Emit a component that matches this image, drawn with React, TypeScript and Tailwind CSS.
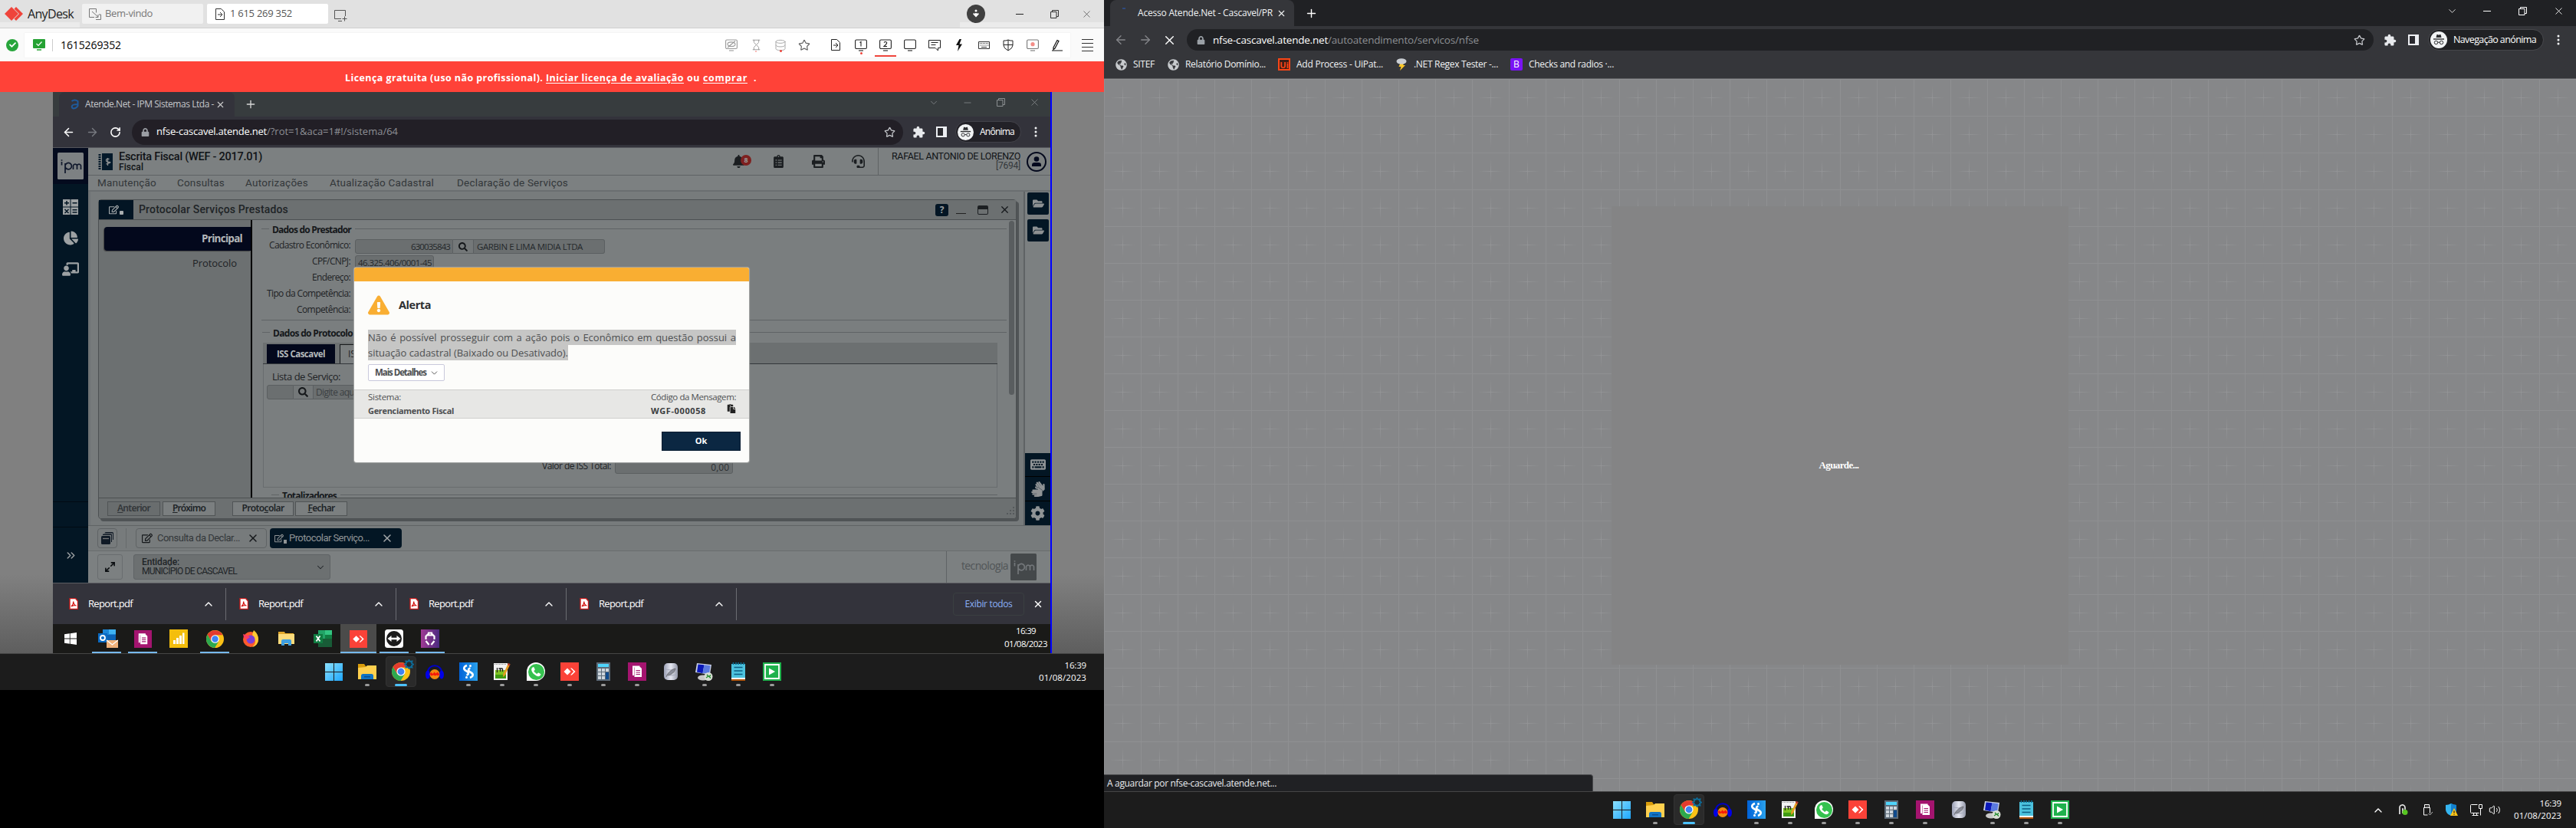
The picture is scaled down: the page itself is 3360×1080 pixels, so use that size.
import React, { useLayoutEffect, useRef } from "react";
import {
  ArrowLeft, ArrowRight, RotateCw, X, Plus, Star, Minus, ChevronDown, ChevronUp, ChevronsRight,
  Hourglass, Database, FileInput, Keyboard, MessageSquareText, Volume2, Maximize2,
} from "lucide-react";
import {
  FaBell, FaClipboardList, FaPrint, FaHeadset, FaChartPie, FaChalkboardTeacher, FaRegEdit, FaCog, FaFolderOpen,
  FaKeyboard, FaExclamationTriangle, FaPaste, FaGlobeAmericas, FaCheck, FaLock, FaSearch, FaSignLanguage,
} from "react-icons/fa";

/** Single line of text whose tracking is tuned so that it spans `w` pixels. */
function T({ w, className = "", children }: { w: number; className?: string; children: React.ReactNode }) {
  const ref = useRef<HTMLSpanElement>(null);
  useLayoutEffect(() => {
    const el = ref.current;
    if (!el) return;
    el.style.letterSpacing = "0px";
    const n = (el.textContent || "").length;
    const natural = el.getBoundingClientRect().width;
    el.style.letterSpacing = (w - natural) / n + "px";
  }, [w]);
  return (
    <span className={"inline-block shrink-0 whitespace-nowrap " + className} style={{ width: w }}>
      <span ref={ref} className="inline-block whitespace-pre [text-decoration:inherit]">{children}</span>
    </span>
  );
}

/* ---------- application icons ---------- */

const Chrome = ({ s = 24 }: { s?: number }) => (
  <svg width={s} height={s} viewBox="0 0 24 24">
    <circle cx="12" cy="12" r="12" fill="#fbc116" />
    <path d="M12 6.400H22.400A12 12 0 0 0 1.600 6L7 15Z" fill="#e33b2e" />
    <path d="M1.600 6A12 12 0 0 0 11.600 24L17 15 12 17.500 7 15Z" fill="#2da94f" />
    <circle cx="12" cy="12" r="5.600" fill="#fff" />
    <circle cx="12" cy="12" r="4.400" fill="#3f83f3" />
  </svg>
);
const Win11 = () => (
  <svg width="23" height="23" viewBox="0 0 23 23">
    <defs><linearGradient id="w11" x1="0" y1="0" x2="1" y2="1"><stop offset="0" stopColor="#8be0ff" /><stop offset="1" stopColor="#1ea7ff" /></linearGradient></defs>
    <path d="M0 0h11v11H0zM12 0h11v11H12zM0 12h11v11H0zM12 12h11v11H12z" fill="url(#w11)" />
  </svg>
);
const Win10 = () => (
  <svg width="16" height="16" viewBox="0 0 16 16" fill="#fff"><path d="M0 2.200 6.800 1.300v6.300H0zM7.600 1.200 16 0v7.600H7.600zM0 8.400h6.800v6.300L0 13.800zM7.600 8.400H16V16l-8.400-1.200z" /></svg>
);
const Explorer = ({ s = 24 }: { s?: number }) => (
  <svg width={s} height={s} viewBox="0 0 24 24">
    <path d="M0 2h8l2 3h6v4H0z" fill="#d99c0b" /><path d="M0 7l10-1 2-2h12v18H0z" fill="#ffd04e" />
    <path d="M4 22v-4.500q0-2.500 2.500-2.500h11q2.500 0 2.500 2.500V22z" fill="#1073c4" /><path d="M8 18h8v1.500H8z" fill="#0a4f91" />
  </svg>
);
const Explorer10 = () => (
  <svg width="21" height="18" viewBox="0 0 21 18">
    <path d="M0 0h8l1 2h11v4H0z" fill="#e2a92c" /><path d="M0 3h21v13H0z" fill="#fcdc7c" />
    <path d="M4 18v-6q0-2 2-2h9q2 0 2 2v6h-4v-3H8v3z" fill="#3f9fe0" />
  </svg>
);
const Audacity = () => (
  <svg width="24" height="22" viewBox="0 0 24 22">
    <path d="M3 13C2 0 22 0 21 13" fill="none" stroke="#0000c8" strokeWidth="2" />
    <ellipse cx="3" cy="15" rx="3" ry="5.500" fill="#0000e8" /><ellipse cx="21" cy="15" rx="3" ry="5.500" fill="#0000e8" />
    <ellipse cx="12" cy="14.500" rx="6.500" ry="6.500" fill="#f28a10" /><path d="M5.500 14l2-2 2 2 2-2.500 2 2 2-2 3 3-2 2-2-1-2 1-2-1-3 1z" fill="#f51a0a" />
  </svg>
);
const Stitch = () => (
  <svg width="24" height="24" viewBox="0 0 24 24">
    <defs><linearGradient id="sg" x1="0" y1="0" x2="1" y2="0"><stop offset="0" stopColor="#0062d8" /><stop offset="1" stopColor="#2aa1ec" /></linearGradient></defs>
    <path d="M0 0h24v24H0z" fill="url(#sg)" />
    <path d="M10 4C5.500 5.500 5 9 9 11s3.500 5 .5 5.500M14 20c4.500-1.500 5-5 1-7s-3.500-5-.5-5.500" fill="none" stroke="#fff" strokeWidth="2.600" />
    <circle cx="14.500" cy="4.500" r="1.500" fill="#fff" /><circle cx="9.500" cy="19.500" r="1.500" fill="#fff" />
  </svg>
);
const NotepadPP = () => (
  <svg width="24" height="24" viewBox="0 0 24 24">
    <path d="M1 1h18v22H1z" fill="#f3f3f3" /><path d="M3 10h14v11H3z" fill="#7fc321" /><path d="M3 16h14v5H3z" fill="#3f9b12" />
    <path d="M2 2.500h16" stroke="#888" strokeDasharray="1 1" /><path d="M5.500 7v6M7.500 8h5M9.500 8v4M12.500 8v4" stroke="#222" strokeWidth="1.300" />
    <path d="M20 1l2.500 1.500L15.500 17l-2.500 2 .3-3.400z" fill="#e59b22" /><path d="M20 1l2.500 1.500-1 2-2.300-1.300z" fill="#b33" />
  </svg>
);
const WhatsApp = () => (
  <span className="flex h-6 w-6 items-center justify-center rounded-full rounded-bl-sm bg-white"><span className="flex h-[21px] w-[21px] items-center justify-center rounded-full bg-[#35c24f]"><svg width="14" height="14" viewBox="0 0 24 24" fill="#fff"><path d="M6.600 1.500C5 1.500 2 4 2 7.500c0 3 2.600 7.400 6.200 10.600 3.200 2.800 6.600 4.400 9.300 4.400 3 0 5.500-2.500 5.500-4.600 0-.8-5-3.600-5.800-3.400-1 .2-2.300 2.700-3.200 2.500C12.500 16.700 7.800 12.200 7.600 10.800c-.1-.8 2.200-2.200 2.300-3C10 7 8 1.500 6.600 1.500z" /></svg></span></span>
);
const AnyDeskApp = ({ s = 24 }: { s?: number }) => (
  <svg width={s} height={s} viewBox="0 0 24 24"><path d="M0 0h24v24H0z" fill="#fb4238" /><path d="M9 7.500l4.500 4.500L9 16.500 4.500 12zM13 7.500h1.800L19.500 12l-4.700 4.500H13l4.200-4.500z" fill="#fff" /></svg>
);
const Calc = () => (
  <svg width="18" height="24" viewBox="0 0 18 24">
    <path d="M0 0h18v24H0z" fill="#5d6b78" /><path d="M2 2h14v4H2z" fill="#4fd4fa" />
    <path d="M2 8h4v4H2zM7 8h4v4H7zM12 8h4v4h-4zM2 13h4v4H2zM7 13h4v4H7zM2 18h4v4H2zM7 18h4v4H7z" fill="#cdd5dc" /><path d="M12 13h4v9h-4z" fill="#0f4a8c" />
  </svg>
);
const DocsApp = ({ s = 24 }: { s?: number }) => (
  <svg width={s} height={s} viewBox="0 0 24 24"><path d="M0 0h24v24H0z" fill="#a4146f" /><path d="M6 4.500h9.500v2H8V17H6z" fill="#fff" /><path d="M8.500 6H16l2 2v11H8.500z" fill="#fff" /><path d="M10.500 10.500h5.500M10.500 13h5.500M10.500 15.500h5.500" stroke="#a4146f" strokeWidth="1.200" /></svg>
);
const Db = () => (
  <svg width="18" height="22" viewBox="0 0 18 22">
    <defs><linearGradient id="dbg" x1="0" x2="1"><stop offset="0" stopColor="#9a9fb4" /><stop offset=".5" stopColor="#e6e8f2" /><stop offset="1" stopColor="#9397a8" /></linearGradient></defs>
    <rect width="18" height="22" rx="5" fill="url(#dbg)" /><path d="M0 7q9 4 18 0M0 14q9 4 18 0" stroke="#a4a8ba" fill="none" /><path d="M3 18C5 12 10 8 15 7c-1 5-5 8-10 9" fill="#8b8e9b" stroke="#555" strokeWidth=".6" />
  </svg>
);
const Rdp = () => (
  <svg width="24" height="24" viewBox="0 0 24 24">
    <path d="M2 1l19 2-2 13L0 13z" fill="#c9d0e6" /><path d="M3.500 2.500l8 .8-2 11L2 12.500z" fill="#0a18b8" /><path d="M11.500 3.300l8 .9-1.500 10.500-8.500-1z" fill="#5b7ae0" />
    <ellipse cx="10" cy="20" rx="7" ry="3.500" fill="#c8c8c8" /><circle cx="17" cy="18.500" r="5.500" fill="#d8ddd4" /><path d="M14 20l3-2-2-2M20 16.500l-2 2 2 2" stroke="#1f8c2c" strokeWidth="1.400" fill="none" />
  </svg>
);
const Notepad = () => (
  <svg width="18" height="24" viewBox="0 0 18 24"><path d="M0 2h18v19H0z" fill="#4cc2de" /><path d="M0 20h18v2H0z" fill="#f4f4f4" /><path d="M0 22h18v2H0z" fill="#b3570e" /><path d="M2.500 0v3M6 0v3M9 0v3M12.500 0v3M16 0v3" stroke="#0b6c92" strokeWidth="1.600" /><path d="M3.500 6.500h11M3.500 11h11M3.500 15.500h11" stroke="#0d5d83" strokeWidth="1.500" /></svg>
);
const Camtasia = () => (
  <svg width="24" height="24" viewBox="0 0 24 24"><path d="M0 0h24v24H0z" fill="#1fb14c" /><path d="M3 3h18v18H3z" fill="none" stroke="#fff" strokeWidth="1.800" /><path d="M8 7.500l8 4.500-8 4.500z" fill="#fff" /></svg>
);
const Outlook = () => (
  <svg className="ml-[3px]" width="26" height="26" viewBox="0 0 26 26"><path d="M6 1h17v14H6z" fill="#1b86d8" /><path d="M14 1h9v6h-9z" fill="#3fb2f2" /><path d="M6 8h17v8H6z" fill="#0c62b4" /><path d="M0 6h12v12H0z" fill="#0a6ac2" /><circle cx="6" cy="12" r="3" fill="none" stroke="#fff" strokeWidth="1.800" /><path d="M11 15h15v10H11z" fill="#f0b27a" /><path d="M11 15l7.500 6 7.500-6" stroke="#fff" strokeWidth="1.300" fill="none" /></svg>
);
const PowerBi = () => (
  <svg width="24" height="24" viewBox="0 0 24 24"><path d="M0 0h24v24H0z" fill="#f4be0c" /><path d="M5 14h3v5H5zM9 11h3v8H9zM13 8h3v11h-3zM17 4.500h2.500V19H17z" fill="#fff" /></svg>
);
const Firefox = () => (
  <svg width="22" height="22" viewBox="0 0 22 22"><circle cx="11" cy="12" r="10" fill="#ff5a2c" /><path d="M15 0q6 5 6 12a10 10 0 0 1-8 10q6-5 3-11-5-3-1-11z" fill="#ffc934" /><circle cx="11" cy="12" r="5.500" fill="#7b3fd6" /><path d="M1 5q3 1 6 2l3 2-4 3Q2 11 1 5z" fill="#ff3b62" /></svg>
);
const Excel = () => (
  <svg width="24" height="22" viewBox="0 0 24 22"><path d="M6 0h9v11H6z" fill="#21a366" /><path d="M15 0h9v6h-9z" fill="#33c481" /><path d="M15 6h9v5h-9z" fill="#107c41" /><path d="M6 11h18v11H6z" fill="#185c37" /><path d="M0 5h12v12H0z" fill="#107c41" /><path d="M3.500 7.500l5 7M8.500 7.500l-5 7" stroke="#fff" strokeWidth="1.800" /></svg>
);
const TeamViewer = () => (
  <svg width="24" height="24" viewBox="0 0 24 24"><rect width="24" height="24" rx="3.500" fill="#fff" /><circle cx="12" cy="12" r="10" fill="#1b1b1b" /><path d="M3.500 12l5-4v2.700h7V8l5 4-5 4v-2.700h-7V16z" fill="#fff" /></svg>
);
const Robot = () => (
  <svg width="24" height="24" viewBox="0 0 24 24"><defs><linearGradient id="rb" x1="0" x2="1"><stop offset="0" stopColor="#a03a94" /><stop offset="1" stopColor="#4b2a80" /></linearGradient></defs><path d="M0 0h24v24H0z" fill="url(#rb)" /><path d="M9.500 6L6.500 9v4M14.500 6l3 3v4M6.500 15l4 5M17.500 15l-4 5M10 4.500h4v3h-4z" stroke="#fff" strokeWidth="2.200" fill="none" /></svg>
);
const Pdf = () => (
  <svg width="12" height="15" viewBox="0 0 12 15"><path d="M1 .5h7.500L11.500 4v10.500H1z" fill="#fff" stroke="#c31c1c" strokeWidth="1.400" /><path d="M3 11c2-2 3-4 2.700-6.500C6 8 7.500 9.500 9.500 10 7 9.200 5 10 3 11z" fill="none" stroke="#d4120f" strokeWidth="1.200" /></svg>
);
const Incognito = ({ s }: { s: number }) => (
  <svg width={s} height={s} viewBox="0 0 22 22"><circle cx="11" cy="11" r="11" fill="#f1f3f4" /><path d="M7.500 8l1-4h1l1.500.7L12.500 4h1l1 4z" fill="#2b2c2f" /><path d="M4 10h14" stroke="#2b2c2f" strokeWidth="1.400" /><circle cx="7.500" cy="14.500" r="2.200" fill="none" stroke="#2b2c2f" /><circle cx="14.500" cy="14.500" r="2.200" fill="none" stroke="#2b2c2f" /><path d="M9.700 14.200h2.600" stroke="#2b2c2f" /></svg>
);
const SidePanel = () => (
  <svg width="14" height="14" viewBox="0 0 14 14"><path d="M0 0h14v14H0z" fill="#eceef2" /><path d="M2 2h7v10H2z" fill="#2a2a2f" /></svg>
);
const Puzzle = () => (
  <svg width="17" height="17" viewBox="0 0 24 24" fill="#e8eaed"><path d="M20.500 11H19V7c0-1.100-.9-2-2-2h-4V3.500a2.500 2.500 0 0 0-5 0V5H4c-1.100 0-2 .9-2 2v3.800h1.500a2.700 2.700 0 0 1 0 5.400H2V20c0 1.100.9 2 2 2h3.800v-1.500a2.700 2.700 0 0 1 5.400 0V22H17c1.100 0 2-.9 2-2v-4h1.500a2.500 2.500 0 0 0 0-5z" /></svg>
);
const Dots = () => (
  <svg width="4" height="14" viewBox="0 0 4 14" fill="#f1f3f4"><circle cx="2" cy="2" r="1.500" /><circle cx="2" cy="7" r="1.500" /><circle cx="2" cy="12" r="1.500" /></svg>
);
const Restore = ({ c = "#333" }: { c?: string }) => (
  <svg width="11" height="11" viewBox="0 0 11 11" fill="none" stroke={c}><path d="M.5 2.500h7.500v8H.5zM2.500 2.500V.5h8v8H8" /></svg>
);
const Ipm = ({ bg, fg }: { bg: string; fg: string }) => (
  <svg width="34" height="35" viewBox="0 0 34 35"><rect width="34" height="35" rx="1.500" fill={bg} /><path d="M5.500 12v4.500M5.500 9.300v1.400M10 14v13M10 17.500a4.200 4.200 0 1 1 0 .3M20.500 22v-5a2.600 2.600 0 0 1 5 0v5M25.500 17a2.600 2.600 0 0 1 5 0v5" fill="none" stroke={fg} strokeWidth="1.700" /></svg>
);

/** Square slot that centres its icon. */
const Cell = ({ w, children }: { w: number; children?: React.ReactNode }) => (
  <span className="relative flex h-full shrink-0 items-center justify-center" style={{ width: w }}>{children}</span>
);

function LocalTaskbar({ tray }: { tray?: boolean }) {
  const apps: [React.ReactNode, number][] = [
    [<Win11 />, 0], [<Explorer />, 1], [<Chrome />, 2], [<Audacity />, 0], [<Stitch />, 1], [<NotepadPP />, 1], [<WhatsApp />, 1],
    [<AnyDeskApp />, 1], [<Calc />, 1], [<DocsApp />, 1], [<Db />, 0], [<Rdp />, 1], [<Notepad />, 1], [<Camtasia />, 1],
  ];
  return (
    <div className={"flex h-12 w-full shrink-0 border-t border-[#454545] bg-[#1c1c1c] " + (tray ? "pl-[653px]" : "pl-[413px]")}>
      {apps.map(([icon, state], i) => (
        <div key={i} className="relative flex w-11 shrink-0 flex-col items-center">
          <div className={"mt-[3px] flex h-10 w-10 items-center justify-center " + (state === 2 ? "rounded border border-[#333] bg-[#2a2a2a]" : "")}>{icon}</div>
          {state === 2 && (
            <svg className="absolute top-[7px] left-[26px]" width="13" height="13" viewBox="0 0 13 13"><path d="M6.500 1l1.500 2 2.500-.5L10 5l2 1.500L10 8l.5 2.500L8 10l-1.500 2L5 10l-2.500.5L3 8 1 6.500 3 5l-.5-2.500L5 3z" fill="#202b30" stroke="#0d6d9a" strokeWidth="1.800" /></svg>
          )}
          {state === 1 && <i className="absolute top-[39px] h-[3px] w-1.5 rounded-full bg-[#9a9a9a]" />}
          {state === 2 && <i className="absolute top-[39px] h-[3px] w-4 rounded-full bg-[#4cc2ff]" />}
        </div>
      ))}
      {tray && (
        <div className="ml-[377px] flex h-full items-center">
          <Cell w={32}><ChevronUp size={16} color="#fff" strokeWidth={2} /></Cell>
          <Cell w={33}>
            <svg width="13" height="15" viewBox="0 0 13 15"><path d="M2 13V5a3 3 0 0 1 7-1v3M5 6h1v6" fill="none" stroke="#e4e4e4" strokeWidth="1.700" /><circle cx="9" cy="10.500" r="3.500" fill="#58c522" /></svg>
          </Cell>
          <Cell w={31}>
            <svg width="14" height="17" viewBox="0 0 14 17" fill="none" stroke="#fff"><path d="M2.500 5.500v-4h6v4M1.500 5.500h8v7M1.500 5.500v9.500h5" /><path d="M4 3.500h1M6 3.500h1M7.500 13l2 2 3.500-4" stroke="#bbb" /></svg>
          </Cell>
          <Cell w={31}>
            <svg width="16" height="17" viewBox="0 0 16 17"><path d="M7 0q3 2 7 2v6q0 5-7 8Q0 13 0 8V2q4 0 7-2z" fill="#35b5f0" /><path d="M7 0q3 2 7 2v6q0 5-7 8z" fill="#1180cf" /><path d="M11 6l5 10H6z" fill="#ffc61a" /><path d="M11 9.500v3M11 13.700v1" stroke="#222" strokeWidth="1.300" /></svg>
          </Cell>
          <Cell w={33}>
            <svg width="17" height="17" viewBox="0 0 17 17" fill="none" stroke="#fff"><path d="M10.500 1.500h-8q-1 0-1 1v9q0 1 1 1h10M5.500 12.500v3M9.500 12.500v3M3.500 15.500h8M12.500 1.500h4v5h-4zM14.500 6.500v9" /></svg>
          </Cell>
          <Cell w={16}><Volume2 size={19} color="#fff" strokeWidth={1.500} /></Cell>
        </div>
      )}
      <div className={"ml-auto flex flex-col items-end gap-[2px] pt-[8px] text-[11.5px] leading-[14px] text-white " + (tray ? "mr-[19px]" : "mr-[23px]")}>
        <T w={28.5}>16:39</T>
        <T w={62}>01/08/2023</T>
      </div>
    </div>
  );
}

/* ---------- AnyDesk window chrome ---------- */

const MonIcon = ({ children, c = "#222" }: { children?: React.ReactNode; c?: string }) => (
  <svg width="16" height="16" viewBox="0 0 16 16" fill="none" stroke={c} strokeWidth="1.100"><rect x=".6" y="1" width="14.800" height="11.500" rx="1.500" /><path d="M5 15h6" />{children}</svg>
);

function AnyDeskHeader() {
  return (
    <div className="shrink-0">
      <div className="flex h-[37px] items-center border-b border-[#cfcfcf] bg-[#e1e1e1] bg-[linear-gradient(#ebebeb,#ebebeb),linear-gradient(#ebebeb,#ebebeb)] bg-[length:104px_7px,188px_7px] bg-[position:0_100%,100%_100%] bg-no-repeat">
        <svg className="ml-1.5" width="24" height="18" viewBox="0 0 24 18"><path d="M9 0l9 9-9 9-9-9z" fill="#ef443b" /><path d="M15 0l9 9-9 9-2.500-2.500L19 9l-6.500-6.500z" fill="#ef443b" /></svg>
        <T w={60} className="ml-1.5 text-[16px] font-medium text-[#222]">AnyDesk</T>
        <div className="ml-[11px] flex h-[26px] w-[158px] items-center rounded-[2px] bg-[#f1f1f1] pl-[9px] text-[#777]">
          <svg width="16" height="15" viewBox="0 0 16 15" fill="none" stroke="#777"><path d="M7 11.500H.5V.5h9v5M4 4l8 7M12 8v3.500H8.500M13 8h2.500v6.500H9" /></svg>
          <T w={62} className="ml-[5px] text-[13px]">Bem-vindo</T>
        </div>
        <div className="ml-[5px] flex h-[26px] w-[158px] items-center rounded-[2px] bg-white pl-[11px] text-[#555]">
          <svg width="12" height="15" viewBox="0 0 12 15" fill="none" stroke="#333"><path d="M7.500.5h-7v14h11v-10zM3 8h5.500M6 5l3 3-3 3" /></svg>
          <T w={81} className="ml-[7px] text-[13px]">1 615 269 352</T>
        </div>
        <svg className="mt-1 ml-2" width="17" height="15" viewBox="0 0 17 15" fill="none" stroke="#555"><path d="M9 11.500H.5V.5h14V8M5 14.500h5M13.500 8.500v6M10.500 11.500h6" /></svg>
        <div className="ml-auto flex h-full items-center">
          <span className="mr-10 flex h-6 w-6 items-center justify-center rounded-full bg-[#404040]">
            <svg width="8" height="12" viewBox="0 0 8 12"><circle cx="4" cy="2" r="1.500" fill="#fff" /><path d="M.8 5.500L4 9l3.200-3.500M4 5v4" fill="none" stroke="#fff" strokeWidth="2" /></svg>
          </span>
          <i className="h-px w-[10px] bg-[#222]" />
          <span className="ml-[35px]"><Restore /></span>
          <X className="mr-[15px] ml-[29px]" size={15} strokeWidth={1} color="#333" />
        </div>
      </div>
      <div className="flex h-[43px] items-center bg-[#fafafa] pl-2">
        <span className="flex h-4 w-4 items-center justify-center rounded-full bg-[#27a53b]"><FaCheck size={9} color="#fff" /></span>
        <div className="ml-2 flex h-[32px] w-[1364px] items-center bg-white pl-[11px] shadow-[0_0_1px_#ddd]">
          <svg width="16" height="15" viewBox="0 0 16 15"><rect width="16" height="12" rx="1" fill="#25a233" /><path d="M5 14h6" stroke="#25a233" strokeWidth="1.500" /><path d="M4.500 6l2.500 2.500 4.500-5" stroke="#fff" fill="none" strokeWidth="1.200" /></svg>
          <i className="ml-[9px] h-4 w-px bg-[#ccc]" />
          <T w={79} className="ml-[10px] text-[14px] text-black">1615269352</T>
          <div className="ml-auto flex h-full items-center pr-px">
            <Cell w={32}><MonIcon c="#999"><ellipse cx="8" cy="6.700" rx="5" ry="2.800" /><path d="M3 11L13 2.500" /></MonIcon></Cell>
            <Cell w={32}><Hourglass size={15} color="#999" strokeWidth={1.500} /><i className="absolute bottom-[7px] h-0.5 w-0.5 rounded-full bg-[#f7a29d]" /></Cell>
            <Cell w={32}><Database size={16} color="#aaa" strokeWidth={1.500} /><i className="absolute bottom-[7px] h-[3px] w-[3px] rounded-full bg-[#ef443b]" /></Cell>
            <Cell w={30}><Star size={16} color="#666" strokeWidth={1.800} /></Cell>
            <i className="w-[9px]" />
            <Cell w={34}><svg width="12" height="15" viewBox="0 0 12 15" fill="none" stroke="#222"><path d="M7.500.5h-7v14h11v-10zM3 8h5.500M6 5l3 3-3 3" /></svg></Cell>
            <Cell w={32}><MonIcon><path d="M6.500 4.500L8 3.500v6" /></MonIcon><i className="absolute bottom-1 h-[3px] w-[3px] rounded-full bg-[#ef443b]" /></Cell>
            <Cell w={32}><MonIcon><path d="M6 4.500q2-2 3.700 0Q10 6 6 9.500h4" /></MonIcon><i className="absolute bottom-px h-0.5 w-7 bg-[#ef443b]" /></Cell>
            <Cell w={32}><MonIcon /></Cell>
            <Cell w={32}><svg width="16" height="16" viewBox="0 0 16 16" fill="none" stroke="#222"><path d="M.5 1.500h15v10h-3V15L9 11.500H.5zM3.500 4.500h9M3.500 7.500h6" /></svg></Cell>
            <Cell w={32}><svg width="8" height="16" viewBox="0 0 8 16"><path d="M4.500 0L0 8h3.500L2 16l6-9.500H4.500L7 0z" fill="#111" /></svg></Cell>
            <Cell w={32}><svg width="15" height="10" viewBox="0 0 15 10" fill="none" stroke="#333"><path d="M.5.500h14v9H.5zM4 7.500h7" /><path d="M2 2.500h11M2.500 5h11" strokeDasharray="1 1" /></svg></Cell>
            <Cell w={32}><svg width="14" height="16" viewBox="0 0 14 16" fill="none" stroke="#222"><path d="M7 1q3 1.500 6 1v6q0 4-6 7-6-3-6-7V2q3 .5 6-1zM7 1v14M1 7.500h12" /></svg></Cell>
            <Cell w={32}><MonIcon c="#777"><circle cx="8" cy="6.700" r="2.600" fill="#f48d87" stroke="none" /></MonIcon></Cell>
            <Cell w={32}><svg width="14" height="16" viewBox="0 0 14 16" fill="none" stroke="#111"><path d="M2 11L7 1.500 9 2.500 4 12l-2 1.500zM0 15h14" strokeWidth="1.200" /></svg></Cell>
          </div>
        </div>
        <div className="ml-[14px] flex w-4 flex-col gap-1 pl-px">
          <i className="h-px bg-[#333]" /><i className="h-px bg-[#333]" /><i className="h-px bg-[#333]" /><i className="h-px bg-[#333]" />
        </div>
      </div>
      <div className="flex h-10 items-center bg-[#ff4238] pt-1 pl-[450px] text-[12.5px] font-bold text-white">
        <T w={262}>{"Licença gratuita (uso não profissional). "}</T>
        <T w={180} className="underline underline-offset-2">Iniciar licença de avaliação</T>
        <T w={25}>{" ou "}</T>
        <T w={58} className="underline underline-offset-2">comprar</T>
        <span className="ml-[8px]">.</span>
      </div>
    </div>
  );
}

/* ---------- remote desktop ---------- */

function RemoteChrome() {
  return (
    <>
      <div className="flex h-8 shrink-0 items-center bg-[#373c3e] pl-2">
        <div className="flex h-full w-[229px] items-center rounded-t-lg bg-[#33333b] pl-[15px]">
          <svg width="12" height="14" viewBox="0 0 12 14" fill="none" stroke="#1f5b9c" strokeWidth="2"><path d="M1.500 3q4-3 8 0v6q-2 3.500-6 3.500-2.500-1-1.500-3.500 1-2 7.500-2" /></svg>
          <T w={168} className="ml-[7px] text-[12px] text-[#c4c6ca]">Atende.Net - IPM Sistemas Ltda -</T>
          <X className="ml-0.5" size={13} color="#ccc" strokeWidth={2} />
        </div>
        <Plus className="ml-[13px]" size={16} color="#d6d6d6" strokeWidth={2} />
        <div className="mr-[13px] ml-auto flex items-center pb-[5px] text-[#8b8f91]">
          <ChevronDown size={14} strokeWidth={1.300} />
          <Minus className="ml-[30px]" size={14} strokeWidth={1.300} />
          <span className="ml-[31px]"><Restore c="#8b8f91" /></span>
          <X className="ml-[31px]" size={15} strokeWidth={1.200} />
        </div>
      </div>
      <div className="flex h-[41px] shrink-0 items-center border-b border-[#55565c] bg-[#33333b] pl-[12px] text-white">
        <ArrowLeft size={17} strokeWidth={2.200} />
        <ArrowRight className="ml-[14px]" size={17} color="#777a80" />
        <RotateCw className="ml-[14px]" size={15} strokeWidth={2.500} />
        <div className="ml-[14px] flex h-[33px] w-[1006px] items-center rounded-full bg-[#221f26] pl-3">
          <FaLock size={11} color="#9b9ea4" />
          <T w={144} className="ml-[9px] text-[13px] text-white">nfse-cascavel.atende.net</T>
          <T w={171} className="text-[13px] text-[#8d8f95]">/?rot=1&aca=1#!/sistema/64</T>
          <Star className="mr-[10px] ml-auto" size={15} color="#c6c8cc" />
        </div>
        <span className="ml-[12px]"><Puzzle /></span>
        <span className="ml-[14px]"><SidePanel /></span>
        <div className="ml-[12px] flex h-[26px] w-[84px] items-center rounded-full bg-[#222127] pl-[2px] outline outline-1 outline-[#414148]">
          <Incognito s={21} />
          <T w={45} className="ml-[8px] text-[12px]">Anônima</T>
        </div>
        <span className="ml-[18px]"><Dots /></span>
      </div>
    </>
  );
}

const Legend = ({ w, pad, children }: { w: number; pad: string; children: string }) => (
  <div className={"flex h-[18px] shrink-0 items-center " + pad}>
    <i className="-mt-[3px] h-px w-[10px] bg-[#606466]" />
    <T w={w} className="ml-[4px] text-[12px] leading-[18px] font-bold text-[#15181b]">{children}</T>
    <i className="-mt-[3px] ml-[5px] h-px flex-1 bg-[#5f6365]" />
  </div>
);

const FieldRow = ({ label, w, children }: { label: string; w: number; children?: React.ReactNode }) => (
  <div className="flex h-[21px] items-center">
    <div className="flex w-[128px] justify-end pb-[3px]"><T w={w} className="text-[12px] leading-[18px] text-[#1e2225]">{label}</T></div>
    <div className="ml-[6px] flex">{children}</div>
  </div>
);

function ProtocolWindow() {
  return (
    <div className="mt-[10px] ml-[10px] flex h-[417px] w-[1198px] flex-col rounded-[4px] border border-[#4c5052] bg-[#7a7e7f] shadow-[3px_3px_0_#505456]">
      <div className="flex h-[26px] shrink-0 items-center border-b border-[#4c5052] bg-[#6c7071]">
        <div className="flex h-full w-[45px] items-center justify-center gap-px bg-[#031524] text-[#a9adaf]"><FaRegEdit size={13} /><i className="mt-2 h-[5px] w-[5px] rounded-[1px] bg-[#a9adaf]" /></div>
        <T w={195} className="ml-[7px] font-[Roboto] text-[14px] font-medium text-[#202427]">Protocolar Serviços Prestados</T>
        <div className="mr-[7px] ml-auto flex items-center">
          <span className="flex h-4 w-[17px] items-center justify-center rounded-[3px] bg-[#031524] text-[12px] font-bold text-[#9a9ea0]">?</span>
          <i className="mt-[10px] ml-[10px] h-px w-[13px] bg-[#222]" />
          <span className="ml-[15px] h-3 w-[14px] rounded-[2px] border border-t-[5px] border-[#1c1f22]" />
          <X className="ml-[14px]" size={15} color="#15181b" strokeWidth={2} />
        </div>
      </div>
      <div className="flex h-[362px] shrink-0 overflow-hidden">
        <div className="flex w-[200px] flex-col items-end border-r-2 border-black bg-[#6c7071] pt-[9px]">
          <div className="flex h-[31px] w-[191px] items-center justify-end rounded-l-[4px] bg-[#03081c] pr-[11px] shadow-[-1px_1px_1px_#444]"><T w={53} className="text-[13.5px] font-bold text-[#b4b8ba]">Principal</T></div>
          <T w={58} className="mt-[7px] mr-[18px] text-[13px] text-[#1e2225]">Protocolo</T>
        </div>
        <div className="flex w-[996px] flex-col">
          <Legend w={103} pad="mt-[4px] ml-3 mr-3">Dados do Prestador</Legend>
          <div className="mt-[2px] mr-3 ml-3 flex h-[107px] shrink-0 flex-col border-b border-[#5f6365]">
            <div className="-ml-3 flex flex-col">
              <FieldRow label="Cadastro Econômico:" w={106}>
                <div className="flex h-[19px] w-[128px] justify-end rounded-l-[3px] border border-[#5b5f61] bg-[#6b6f70] pr-[3px]"><T w={51} className="text-[11.5px] leading-[17px] text-[#24282b]">630035843</T></div>
                <div className="flex h-[19px] w-[27px] items-center justify-center border-y border-r border-[#5b5f61] bg-[#747879]"><FaSearch size={12} color="#15181b" /></div>
                <div className="flex h-[19px] w-[171px] rounded-r-[3px] border-y border-r border-[#5b5f61] bg-[#6b6f70] pl-[4px]"><T w={138} className="text-[11.5px] leading-[17px] text-[#24282b]">GARBIN E LIMA MIDIA LTDA</T></div>
              </FieldRow>
              <FieldRow label="CPF/CNPJ:" w={50}>
                <div className="flex h-[19px] w-[103px] rounded-[3px] border border-[#5b5f61] bg-[#6b6f70] pl-[3px]"><T w={96} className="text-[11.5px] leading-[17px] text-[#24282b]">46.325.406/0001-45</T></div>
              </FieldRow>
              <FieldRow label="Endereço:" w={50} />
              <FieldRow label="Tipo da Competência:" w={109} />
              <FieldRow label="Competência:" w={70} />
            </div>
          </div>
          <Legend w={104} pad="mt-[8px] ml-[13px] mr-3">Dados do Protocolo</Legend>
          <div className="mt-[3px] mr-[24px] ml-[14px] flex h-[28px] shrink-0 items-end border-b border-[#33373a] bg-[#6c7071] pl-[5px]">
            <div className="flex h-[25px] w-[89px] items-center justify-center bg-[#03081c]"><T w={63} className="text-[11.5px] font-bold text-[#b4b8ba]">ISS Cascavel</T></div>
            <div className="ml-[6px] flex h-[25px] w-[89px] items-center border border-b-0 border-[#15181b] bg-[#7b7f80] pl-[10px] text-[12px] text-[#1e2225]">IS</div>
          </div>
          <div className="mr-[24px] ml-[14px] flex h-[161px] shrink-0 flex-col border-x border-b border-[#686c6e] pl-[4px]">
            <T w={89} className="mt-[7px] ml-[7px] text-[13px] leading-[18px] text-[#1e2225]">Lista de Serviço:</T>
            <div className="mt-[2px] flex h-[19px] text-[12px]">
              <i className="w-[35px] rounded-l-[3px] border border-[#5b5f61] bg-[#6b6f70]" />
              <span className="flex w-[26px] items-center justify-center border-y border-r border-[#5b5f61] bg-[#747879]"><FaSearch size={13} color="#15181b" /></span>
              <span className="flex w-[300px] rounded-r-[3px] border-y border-r border-[#5b5f61] bg-[#6b6f70] pl-[3px] leading-[17px] text-[#3b3f42]"><T w={50}>Digite aqu</T></span>
            </div>
            <div className="mt-[77px] ml-[359px] flex">
              <T w={90} className="mt-[2px] text-[12px] leading-[16px] text-[#1e2225]">Valor de ISS Total:</T>
              <div className="ml-[5px] h-[20px] w-[154px] rounded-[3px] border border-[#5b5f61] bg-[#6b6f70] pr-[4px] text-right text-[12px] leading-[22px] text-[#2c3033]">0,00</div>
            </div>
          </div>
          <Legend w={71} pad="mt-[2px] ml-[25px] mr-[24px]">Totalizadores</Legend>
        </div>
      </div>
      <div className="flex flex-1 items-center rounded-b-[4px] border-t border-[#4c5052] bg-[#6c7071] pl-[11px] font-[Noto_Sans] text-[12px] font-semibold text-[#202427]">
        <div className="flex h-[19px] w-[69px] items-center justify-center border border-[#505456] bg-[#696d6e] text-[#33373a]"><T w={43}><u>A</u>nterior</T></div>
        <div className="ml-[3px] flex h-[19px] w-[69px] items-center justify-center border border-[#505456] bg-[#7b7f80]"><T w={43}><u>P</u>róximo</T></div>
        <div className="ml-[22px] flex h-[19px] w-[80px] items-center justify-center border border-[#505456] bg-[#7b7f80]"><T w={55}>Proto<u>c</u>olar</T></div>
        <div className="ml-[2px] flex h-[19px] w-[68px] items-center justify-center border border-[#505456] bg-[#7b7f80]"><T w={35}><u>F</u>echar</T></div>
        <svg className="mt-2 mr-px ml-auto" width="12" height="12" viewBox="0 0 12 12" fill="#55595b"><path d="M9 0h2v2H9zM5 4h2v2H5zM9 4h2v2H9zM1 8h2v2H1zM5 8h2v2H5zM9 8h2v2H9z" /></svg>
      </div>
    </div>
  );
}

function AlertDialog() {
  return (
    <div className="absolute top-[229px] left-[393px] flex h-[254px] w-[515px] flex-col overflow-hidden rounded-[3px] bg-[#fcfcfa] shadow-[0_0_1px_1px_#a5a7a6]">
      <div className="h-[18px] shrink-0 bg-[#f9ae32]" />
      <div className="mt-[16px] ml-[18px] flex h-[30px] items-center">
        <FaExclamationTriangle size={28} color="#f9ae32" />
        <T w={42} className="ml-3 text-[14.5px] font-bold text-[#2d2f31]">Alerta</T>
      </div>
      <div className="mt-[17px] ml-[18px] flex flex-col items-start text-[13px] leading-5 text-[#4d4f51]">
        <div className="flex w-[480px] justify-between bg-[#c6c6c5]">
          {"Não é possível prosseguir com a ação pois o Econômico em questão possui a".split(" ").map((s, i) => <span key={i}>{s}</span>)}
        </div>
        <T w={261} className="bg-[#c6c6c5]">situação cadastral (Baixado ou Desativado).</T>
      </div>
      <div className="mt-[5px] ml-[18px] flex h-[22px] w-[100px] shrink-0 items-center rounded-[2px] border border-[#c9c9dc] bg-white pl-[8px]">
        <T w={67} className="text-[11.5px] font-bold text-[#4d4f51]">Mais Detalhes</T>
        <ChevronDown className="ml-1" size={13} color="#555" strokeWidth={1.800} />
      </div>
      <div className="mt-[11px] flex h-[38px] shrink-0 justify-between border-y border-[#cfcfcd] bg-[#e7e7e5] px-[17px] text-[11.5px] leading-[18px] text-[#4d4f51]">
        <div className="ml-px flex flex-col"><T w={43}>Sistema:</T><T w={112} className="text-[11px] font-bold">Gerenciamento Fiscal</T></div>
        <div className="flex flex-col"><T w={111}>Código da Mensagem:</T><div className="flex"><T w={72} className="text-[11px] font-bold text-[#3b3d3f]">WGF-000058</T><FaPaste className="ml-[27px]" size={12} color="#222" /></div></div>
      </div>
      <div className="mt-[17px] mr-[11px] ml-auto flex h-[25px] w-[103px] shrink-0 items-center justify-center border border-[#071b30] bg-[#0b2742]"><span className="text-[11px] font-bold text-white">Ok</span></div>
    </div>
  );
}

function ErpPage() {
  return (
    <div className="flex h-[567px] shrink-0">
      <div className="flex w-[46px] shrink-0 flex-col items-center bg-[#031624] text-[#9da1a3]">
        <div className="flex h-[47px] w-full items-center justify-center bg-[#040b1e]"><Ipm bg="#7d8183" fg="#10182c" /></div>
        <svg className="mt-[20px]" width="20" height="20" viewBox="0 0 20 20"><path d="M0 0h9.500v9.500H0zM10.500 0H20v9.500h-9.500zM0 10.500h9.500V20H0zM10.500 10.500H20V20h-9.500z" fill="#9da1a3" /><path d="M5 2v5.500M2 4.700h6M12.500 4.700h6M2.500 13l5 5M7.500 13l-5 5M12.500 13.800h6M12.500 17h6" stroke="#031624" strokeWidth="1.500" /></svg>
        <FaChartPie className="mt-[21px]" size={19} />
        <FaChalkboardTeacher className="mt-[20px]" size={22} />
        <div className="mt-auto mb-[73px] h-[34px] w-full border-y border-[#010a12]" />
        <ChevronsRight className="-mt-[45px] mb-[27px]" size={17} strokeWidth={2} />
      </div>
      <div className="flex flex-1 flex-col bg-[#777b7c]">
        <div className="flex h-[36px] shrink-0 items-center border-b border-[#5f6365] bg-[#7c8081] pl-[13px]">
          <svg width="19" height="22" viewBox="0 0 19 22"><path d="M5 0h14v22H5z" fill="#04192a" /><path d="M2 1v21" stroke="#04192a" strokeWidth="3" strokeDasharray="2 1" /><path d="M14.500 7.500q-4-1-4 1.500t4 2.500-4 2.500M12.500 6v10" stroke="#8a8e90" fill="none" strokeWidth="1.300" /></svg>
          <div className="-mt-px ml-2 flex flex-col font-[Roboto] font-medium text-[#101316]">
            <T w={187} className="text-[14.5px] leading-[15px]">Escrita Fiscal (WEF - 2017.01)</T>
            <T w={32} className="text-[12px] leading-[12px]">Fiscal</T>
          </div>
          <div className="ml-auto flex h-full items-center text-[#1b1e21]">
            <Cell w={52}><FaBell size={17} /><i className="absolute top-[9px] left-[29px] flex h-[14px] w-[14px] items-center justify-center rounded-full bg-[#7e201f] text-[9px] font-bold not-italic text-[#999]">8</i></Cell>
            <Cell w={52}><FaClipboardList size={17} /></Cell>
            <Cell w={52}><FaPrint size={17} /></Cell>
            <Cell w={52}><FaHeadset size={17} /></Cell>
            <div className="flex h-full w-[225px] items-center justify-end border-l border-[#5f6365] font-[Roboto] text-[#101316]">
              <div className="-mt-[2px] flex flex-col items-end">
                <T w={168} className="text-[12.500px] leading-[13px]">RAFAEL ANTONIO DE LORENZO</T>
                <T w={32} className="text-[12px] leading-[13px] text-[#33373a]">[7694]</T>
              </div>
              <span className="mr-[5px] ml-[8px] flex h-[26px] w-[26px] items-center justify-center rounded-full border-[2.5px] border-[#04091d]"><svg width="12" height="13" viewBox="0 0 12 13" fill="#04091d"><circle cx="6" cy="3.500" r="3.300" /><path d="M0 13V11q0-3 3.500-3h5Q12 8 12 11v2z" /></svg></span>
            </div>
          </div>
        </div>
        <div className="flex h-[21px] shrink-0 items-center border-b-2 border-[#6a6e70] bg-[#7c8081] pb-[2px] pl-3 font-[Roboto] text-[13.5px] leading-[16px] text-[#33373a]">
          <T w={77}>Manutenção</T><T w={62} className="ml-[27px]">Consultas</T><T w={82} className="ml-[27px]">Autorizações</T><T w={136} className="ml-[28px]">Atualização Cadastral</T><T w={145} className="ml-[30px]">Declaração de Serviços</T>
        </div>
        <div className="flex h-[436px] shrink-0 border-b border-[#5f6365]">
          <div className="relative w-[1220px] shrink-0 border-l-[3px] border-[#6f7375]">
            <ProtocolWindow />
            <i className="absolute top-[38px] right-[12px] h-[227px] w-[7px] rounded-full bg-[#595d5f]" />
          </div>
          <div className="flex flex-1 flex-col border-l-2 border-[#5f6365] bg-[#7c8081]">
            <div className="mt-[1px] ml-[3px] flex h-[29px] w-[28px] items-center justify-center rounded-[2px] bg-[#031624]"><FaFolderOpen size={15} color="#8d9193" /></div>
            <div className="mt-[6px] ml-[3px] flex h-[29px] w-[28px] items-center justify-center rounded-[2px] bg-[#031624]"><FaFolderOpen size={15} color="#8d9193" /></div>
            <div className="mt-auto flex flex-col divide-y divide-black bg-[#031624] text-[#8f9395]">
              <span className="flex h-[31px] items-center justify-center"><FaKeyboard size={20} /></span>
              <span className="flex h-[32px] items-center justify-center"><FaSignLanguage size={20} /></span>
              <span className="flex h-[31px] items-center justify-center"><FaCog size={19} /></span>
            </div>
          </div>
        </div>
        <div className="flex h-[33px] shrink-0 items-center border-b border-[#696d6f] pl-3 font-[Roboto] text-[#33373a]">
          <span className="flex h-[26px] w-[26px] items-center justify-center rounded-[4px] border border-[#5f6365]"><svg width="16" height="16" viewBox="0 0 16 16" fill="#101a26"><rect y="5" width="12" height="11" rx="1.500" /><path d="M2 4V3.500Q2 2.500 3 2.500h10q1 0 1 1V13h-1V4zM4.500 1.500Q4.500 0 6 0h8.500Q16 0 16 1.500V10h-1V1.500z" /><path d="M2 8.500h8" stroke="#777" strokeWidth="1.300" /></svg></span>
          <i className="ml-[11px] h-[26px] w-px bg-[#666a6c]" />
          <div className="ml-[12px] flex h-[26px] w-[171px] items-center rounded-[4px] border border-[#5f6365] pl-[7px]"><FaRegEdit size={14} color="#15181b" /><T w={108} className="ml-[6px] text-[13px]">Consulta da Declar...</T><X className="ml-[9px]" size={16} color="#15181b" strokeWidth={2.200} /></div>
          <div className="ml-[4px] flex h-[26px] w-[172px] items-center rounded-[4px] bg-[#031624] pl-[6px] text-[#8f9395]"><FaRegEdit size={12} /><i className="mt-2 mr-px h-[5px] w-[4px] bg-[#8f9395]" /><T w={105} className="ml-[2px] text-[13px]">Protocolar Serviço...</T><X className="ml-[15px]" size={16} color="#a4a8aa" strokeWidth={2.200} /></div>
        </div>
        <div className="flex flex-1 items-center bg-[#7c8081] pl-3">
          <span className="flex h-[33px] w-[33px] items-center justify-center rounded-[3px] border border-[#696d6f]"><Maximize2 size={15} color="#0a0d10" strokeWidth={2.600} /></span>
          <div className="ml-[14px] flex h-[33px] w-[257px] items-center justify-between rounded-[3px] border border-[#5f6365] bg-[#6c7071] pr-[5px] pl-[10px] font-[Roboto] text-[#202427]">
            <div className="-mt-[2px] flex flex-col"><T w={49} className="text-[12px] leading-[12px] font-medium">Entidade:</T><T w={124} className="text-[12px] leading-[12px]">MUNICÍPIO DE CASCAVEL</T></div>
            <ChevronDown size={14} strokeWidth={1.800} />
          </div>
          <div className="ml-auto flex h-full w-[136px] items-center border-l border-[#5f6365] pl-[19px]">
            <T w={61} className="pb-1 text-[14px] text-[#515557]">tecnologia</T>
            <span className="ml-[3px]"><Ipm bg="#44484a" fg="#73777a" /></span>
          </div>
        </div>
      </div>
      <AlertDialog />
    </div>
  );
}

function RemoteScreen() {
  const apps: [React.ReactNode, number][] = [
    [<Win10 />, 0], [<Outlook />, 1], [<DocsApp s={23} />, 1], [<PowerBi />, 0], [<Chrome s={23} />, 1],
    [<Firefox />, 0], [<Explorer10 />, 0], [<Excel />, 0], [<AnyDeskApp s={23} />, 2], [<TeamViewer />, 1], [<Robot />, 1],
  ];
  return (
    <div className="relative flex h-[732px] w-[1303px] shrink-0 flex-col overflow-hidden border-r-2 border-[#0000ff]">
      <RemoteChrome />
      <ErpPage />
      <div className="flex h-[54px] shrink-0 items-center border-t border-[#5c5d62] bg-[#33333b] text-white">
        {[0, 1, 2, 3].map((i) => (
          <div key={i} className={"flex h-[42px] shrink-0 items-center border-r border-[#6b6c72] " + (i === 0 ? "w-[226px] pl-[21px]" : "w-[222px] pl-[17px]")}>
            <Pdf /><T w={58} className="ml-[13px] text-[13px]">Report.pdf</T><ChevronUp className="mr-[14px] ml-auto" size={16} strokeWidth={2} />
          </div>
        ))}
        <div className="mr-[11px] ml-auto flex h-[30px] w-[93px] items-center justify-center rounded border border-[#3a3f41]"><T w={62} className="text-[12px] font-medium text-[#8ab0f8]">Exibir todos</T></div>
        <X className="mr-[9px]" size={14} strokeWidth={2.500} />
      </div>
      <div className="flex h-[38px] shrink-0 bg-[#1a1a18] text-white">
        {apps.map(([icon, s], i) => (
          <div key={i} className={"relative flex h-full w-[46.900px] shrink-0 items-center justify-center " + (s === 2 ? "bg-[#4b4b4a]" : "")}>
            {icon}
            {s > 0 && <i className={"absolute bottom-0 h-0.5 bg-[#76b9ed] " + (s === 2 ? "w-full" : "w-[38px]")} />}
          </div>
        ))}
        <div className="mr-[4px] ml-auto flex flex-col items-center text-[11.5px] leading-[17px]"><T w={26}>16:39</T><T w={56}>01/08/2023</T></div>
      </div>
    </div>
  );
}

/* ---------- right monitor ---------- */

const Bookmark = ({ icon, w, cls, children }: { icon: React.ReactNode; w: number; cls: string; children: string }) => (
  <div className={"flex items-center " + cls}>
    <span className="flex w-4 justify-center">{icon}</span>
    <T w={w} className="ml-2 text-[12px] text-[#f1f3f4]">{children}</T>
  </div>
);

function RightMonitor() {
  return (
    <div className="flex h-full w-[1920px] flex-col">
      <div className="flex h-[34px] shrink-0 items-center bg-[#202124] pl-[8px]">
        <div className="flex h-full w-[240px] items-center rounded-t-lg bg-[#35363a] pl-[16px]">
          <i className="mb-3 h-0.5 w-1 bg-[#2f4a7d]" />
          <T w={176} className="ml-[16px] text-[12px] text-[#f1f3f4]">Acesso Atende.Net - Cascavel/PR</T>
          <X className="ml-[5px]" size={13} color="#f1f3f4" strokeWidth={2} />
        </div>
        <Plus className="ml-[14px]" size={17} color="#fff" strokeWidth={2} />
        <div className="mr-[15px] ml-auto flex items-center pb-[5px] text-white">
          <ChevronDown size={15} strokeWidth={1.300} /><i className="ml-[33px] h-px w-[10px] bg-white" /><span className="ml-[36px]"><Restore c="#fff" /></span><X className="ml-[34px]" size={15} strokeWidth={1.400} />
        </div>
      </div>
      <div className="flex h-[36px] shrink-0 items-center bg-[#35363a] pl-[13px] text-white">
        <ArrowLeft size={18} color="#85868a" strokeWidth={1.800} />
        <ArrowRight className="ml-[14px]" size={18} color="#85868a" strokeWidth={1.800} />
        <X className="ml-[13px]" size={19} strokeWidth={1.800} />
        <div className="ml-[13px] flex h-[28px] w-[1548px] items-center rounded-full bg-[#202124] pl-[13px]">
          <FaLock size={11} color="#9aa0a6" />
          <T w={150} className="ml-[10px] text-[13.5px]">nfse-cascavel.atende.net</T>
          <T w={197} className="text-[13.5px] text-[#8b8e92]">/autoatendimento/servicos/nfse</T>
          <Star className="mr-[11px] ml-auto" size={15} color="#c6c8cc" />
        </div>
        <span className="ml-[13px]"><Puzzle /></span>
        <span className="ml-[15px]"><SidePanel /></span>
        <div className="ml-[13px] flex h-[26px] w-[149px] items-center rounded-full bg-[#202124] pl-[2px] outline outline-1 outline-[#46474b]"><Incognito s={22} /><T w={108} className="ml-[8px] text-[12.5px]">Navegação anónima</T></div>
        <span className="ml-[18px]"><Dots /></span>
      </div>
      <div className="flex h-[33px] shrink-0 items-start border-b border-[#5e5f62] bg-[#35363a] pt-[5px] pl-[14px]">
        <Bookmark w={28} cls="" icon={<FaGlobeAmericas size={15} color="#c7cacd" />}>SITEF</Bookmark>
        <Bookmark w={105} cls="ml-[16px]" icon={<FaGlobeAmericas size={15} color="#c7cacd" />}>Relatório Domínio...</Bookmark>
        <Bookmark w={113} cls="ml-[16px]" icon={<span className="flex h-4 w-4 items-center justify-center border-2 border-[#fa4616] bg-[#3d1d16] text-[11px] leading-none font-bold text-[#fa4616]">Ui</span>}>Add Process - UiPat...</Bookmark>
        <Bookmark w={110} cls="ml-[16px]" icon={<svg width="14" height="16" viewBox="0 0 14 16"><path d="M6 5h5l-2 4h3l-7 7 1.500-5H3.500z" fill="#ffc928" /><ellipse cx="7" cy="4" rx="6.500" ry="3.800" fill="#c9cdd2" /></svg>}>.NET Regex Tester -...</Bookmark>
        <Bookmark w={111} cls="ml-[16px]" icon={<span className="flex h-4 w-4 items-center justify-center rounded-[2px] bg-[#7a13f5] text-[12px] leading-none font-medium text-white">B</span>}>Checks and radios ·...</Bookmark>
      </div>
      <div className="relative flex flex-1 items-center justify-center bg-[#868789]">
        <svg className="absolute inset-0 h-full w-full">
          <defs>
            <radialGradient id="fade"><stop offset="0" stopColor="#939496" /><stop offset="1" stopColor="#939496" stopOpacity="0" /></radialGradient>
            <pattern id="grid" width="48" height="48" patternUnits="userSpaceOnUse">
              <path d="M0 0h48v1H0zM0 1h1v47H0z" fill="#8f9092" />
              <rect x="8" y="24" width="33" height="1" fill="url(#fade)" /><rect x="24" y="8" width="1" height="33" fill="url(#fade)" />
            </pattern>
          </defs>
          <rect width="100%" height="100%" fill="url(#grid)" />
        </svg>
        <div className="relative flex h-[598px] w-[596px] items-center justify-center bg-[#848485]">
          <T w={52} className="mt-[78px] mr-[3px] font-['Liberation_Serif'] text-[13px] font-bold text-white">Aguarde...</T>
        </div>
        <div className="absolute bottom-0 left-0 flex h-[22px] w-[638px] items-center rounded-tr-[4px] border-t border-r border-[#4a4b4e] bg-[#202124] pl-1"><T w={221} className="text-[12px] text-[#e8eaed]">A aguardar por nfse-cascavel.atende.net...</T></div>
      </div>
      <LocalTaskbar tray />
    </div>
  );
}

export default function App() {
  return (
    <div className="flex h-[1080px] w-[3360px] overflow-hidden bg-black font-['Open_Sans','Noto_Sans',sans-serif]">
      <div className="flex w-[1440px] shrink-0 flex-col">
        <AnyDeskHeader />
        <div className="flex h-[732px] shrink-0 bg-[linear-gradient(#808080_0%,#808080_86%,#5e5e5e_100%)] pl-[69px]">
          <RemoteScreen />
        </div>
        <LocalTaskbar />
      </div>
      <RightMonitor />
    </div>
  );
}
